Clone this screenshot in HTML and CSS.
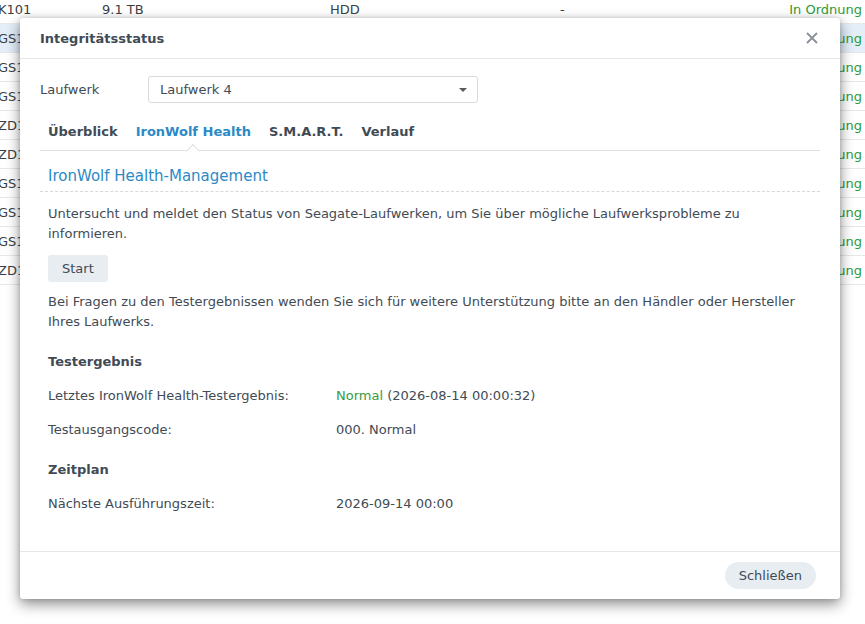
FILE: index.html
```html
<!DOCTYPE html>
<html lang="de">
<head>
<meta charset="utf-8">
<title>Integritätsstatus</title>
<link rel="stylesheet" href="styles.css">
</head>
<body>
<div class="list">
  <div class="row"><span class="c1">K101</span><span class="c2">9.1 TB</span><span class="c3">HDD</span><span class="c4">-</span><span class="c5">In Ordnung</span></div>
  <div class="row sel"><span class="c1">GS1</span><span class="c2">9.1 TB</span><span class="c3">HDD</span><span class="c4">-</span><span class="c5">In Ordnung</span></div>
  <div class="row"><span class="c1">GS1</span><span class="c2">9.1 TB</span><span class="c3">HDD</span><span class="c4">-</span><span class="c5">In Ordnung</span></div>
  <div class="row"><span class="c1">GS1</span><span class="c2">9.1 TB</span><span class="c3">HDD</span><span class="c4">-</span><span class="c5">In Ordnung</span></div>
  <div class="row"><span class="c1">ZD1</span><span class="c2">9.1 TB</span><span class="c3">HDD</span><span class="c4">-</span><span class="c5">In Ordnung</span></div>
  <div class="row"><span class="c1">ZD1</span><span class="c2">9.1 TB</span><span class="c3">HDD</span><span class="c4">-</span><span class="c5">In Ordnung</span></div>
  <div class="row"><span class="c1">GS1</span><span class="c2">9.1 TB</span><span class="c3">HDD</span><span class="c4">-</span><span class="c5">In Ordnung</span></div>
  <div class="row"><span class="c1">GS1</span><span class="c2">9.1 TB</span><span class="c3">HDD</span><span class="c4">-</span><span class="c5">In Ordnung</span></div>
  <div class="row"><span class="c1">GS1</span><span class="c2">9.1 TB</span><span class="c3">HDD</span><span class="c4">-</span><span class="c5">In Ordnung</span></div>
  <div class="row"><span class="c1">ZD1</span><span class="c2">9.1 TB</span><span class="c3">HDD</span><span class="c4">-</span><span class="c5">In Ordnung</span></div>
</div>

<div class="dialog">
  <div class="dlg-head">
    <span class="dlg-title">Integritätsstatus</span>
    <svg class="close" width="12" height="12" viewBox="0 0 12 12"><path d="M1 1L11 11M11 1L1 11" stroke="#8a9099" stroke-width="1.8" fill="none"/></svg>
  </div>
  <div class="dlg-body">
    <div class="field">
      <span class="field-label">Laufwerk</span>
      <div class="select"><span>Laufwerk 4</span><span class="caret"></span></div>
    </div>
    <div class="tabs">
      <span class="tab">Überblick</span>
      <span class="tab active">IronWolf Health</span>
      <span class="tab">S.M.A.R.T.</span>
      <span class="tab">Verlauf</span>
    </div>
    <div class="section-title">IronWolf Health-Management</div>
    <div class="content">
      <p class="para">Untersucht und meldet den Status von Seagate-Laufwerken, um Sie über mögliche Laufwerksprobleme zu informieren.</p>
      <button class="btn start">Start</button>
      <p class="para p2">Bei Fragen zu den Testergebnissen wenden Sie sich für weitere Unterstützung bitte an den Händler oder Hersteller Ihres Laufwerks.</p>
      <div class="subhead">Testergebnis</div>
      <div class="kv"><span class="k">Letztes IronWolf Health-Testergebnis:</span><span class="v"><span class="ok">Normal</span> (2026-08-14 00:00:32)</span></div>
      <div class="kv"><span class="k">Testausgangscode:</span><span class="v">000. Normal</span></div>
      <div class="subhead">Zeitplan</div>
      <div class="kv"><span class="k">Nächste Ausführungszeit:</span><span class="v">2026-09-14 00:00</span></div>
    </div>
  </div>
  <div class="dlg-foot">
    <button class="btn close-btn">Schließen</button>
  </div>
</div>
</body>
</html>
```

FILE: styles.css
```css
html, body {
  margin: 0;
  padding: 0;
  background: #ffffff;
}
body {
  font-family: "DejaVu Sans", Verdana, sans-serif;
  font-size: 13px;
  color: #414b55;
  width: 865px;
  height: 624px;
  overflow: hidden;
  position: relative;
}

/* background list */
.list {
  margin-top: -5px;
}
.row {
  height: 28px;
  border-bottom: 1px solid #e6e9ec;
  display: flex;
  align-items: center;
  white-space: nowrap;
  color: #3a3f45;
}
.row.sel {
  background: #e3eef8;
}
.c1 { width: 104px; margin-left: -2px; }
.c2 { width: 228px; }
.c3 { width: 230px; }
.c4 { width: 200px; }
.c5 { flex: 1; text-align: right; padding-right: 3px; color: #2e9b33; }

/* dialog (floating window) */
.dialog {
  position: absolute;
  left: 20px;
  top: 18px;
  width: 820px;
  height: 581px;
  background: #ffffff;
  border-radius: 3px;
  box-shadow: 0 5px 14px rgba(0, 0, 0, 0.45), 0 0 4px rgba(0, 0, 0, 0.15);
  display: flex;
  flex-direction: column;
}
.dlg-head {
  height: 40px;
  border-bottom: 1px solid #e5e8eb;
  display: flex;
  align-items: center;
  justify-content: space-between;
  padding: 0 22px 0 20px;
}
.dlg-title {
  font-weight: bold;
  font-size: 13px;
  color: #414b55;
}
.close {
  display: block;
}
.dlg-body {
  flex: 1;
  padding: 17px 20px 0 20px;
}
.field {
  display: flex;
  align-items: center;
}
.field-label {
  width: 108px;
}
.select {
  height: 25px;
  border: 1px solid #d7dbe0;
  border-radius: 3px;
  display: flex;
  align-items: center;
  justify-content: space-between;
  padding: 0 10px 0 11px;
  box-sizing: content-box;
  width: 307px;
}
.caret {
  width: 0;
  height: 0;
  border-left: 4px solid transparent;
  border-right: 4px solid transparent;
  border-top: 4px solid #555c63;
}
.tabs {
  display: flex;
  height: 37px;
  margin-top: 10px;
  border-bottom: 1px solid #dde1e5;
  padding-left: 8px;
  gap: 18px;
  align-items: center;
}
.tab {
  font-weight: bold;
  color: #414b55;
  position: relative;
  height: 37px;
  line-height: 38px;
}
.tab.active {
  color: #2b8ac6;
}
.tab.active::after {
  content: "";
  position: absolute;
  left: 50%;
  bottom: -1px;
  width: 9px;
  height: 9px;
  margin-left: -5px;
  background: #ffffff;
  border-left: 1px solid #dde1e5;
  border-top: 1px solid #dde1e5;
  transform: translateY(5px) rotate(45deg);
}
.section-title {
  margin-top: 15px;
  padding: 0 0 5px 8px;
  font-size: 15px;
  line-height: 20px;
  color: #2b8ac6;
  border-bottom: 1px dashed #d5d9de;
}
.content {
  padding-left: 8px;
}
.para {
  margin: 12px 0 0 0;
  line-height: 20px;
}
.p2 {
  margin-top: 10px;
}
.btn {
  font-family: inherit;
  font-size: 13px;
  color: #414b55;
  background: #e8edf2;
  border: none;
  height: 27px;
  padding: 0 14px;
  cursor: pointer;
}
.start {
  display: block;
  margin-top: 11px;
  border-radius: 3px;
}
.subhead {
  font-weight: bold;
  line-height: 20px;
  margin-top: 20px;
}
.kv {
  display: flex;
  line-height: 20px;
  margin-top: 14px;
}
.k {
  width: 288px;
}
.ok {
  color: #3a9b3a;
}
.dlg-foot {
  height: 47px;
  border-top: 1px solid #e5e8eb;
  display: flex;
  align-items: center;
  justify-content: flex-end;
  padding-right: 24px;
}
.close-btn {
  border-radius: 14px;
}
```
